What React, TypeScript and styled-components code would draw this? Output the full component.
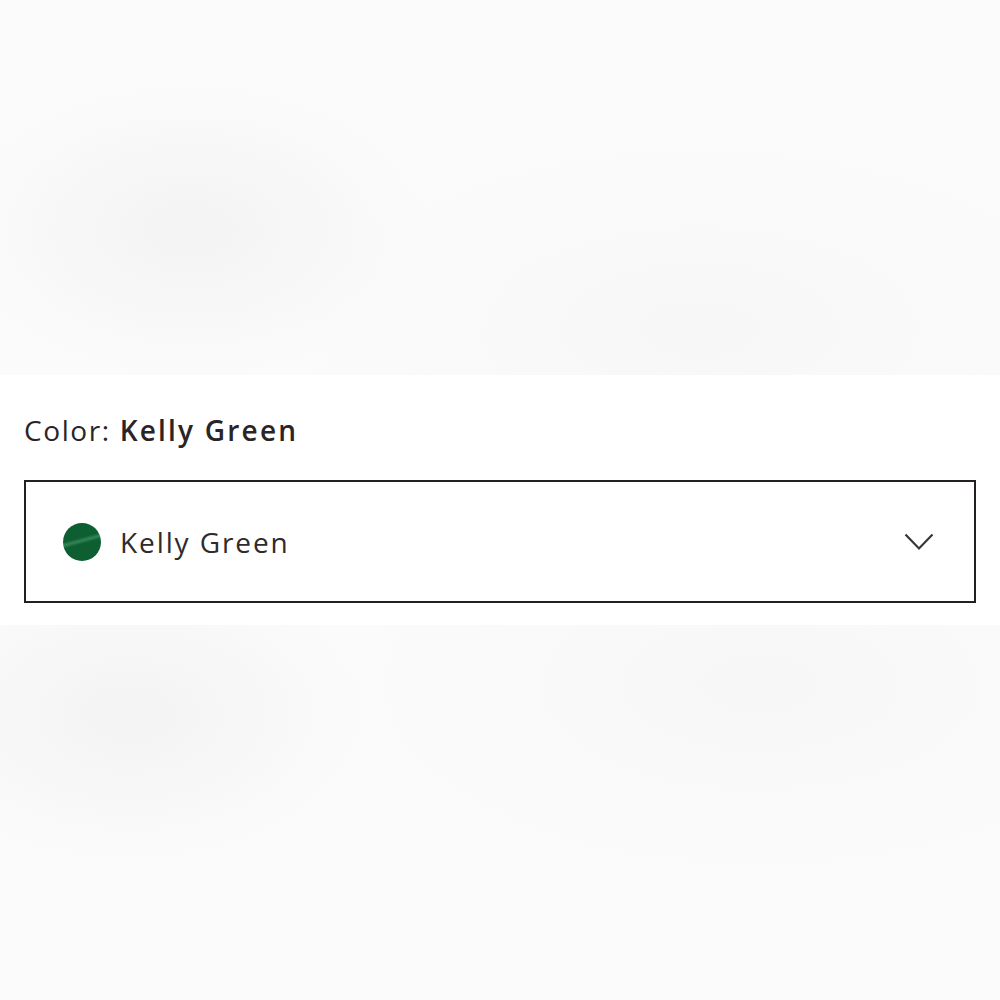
import styled, { createGlobalStyle } from "styled-components";

const GlobalStyle = createGlobalStyle`
  html, body {
    margin: 0;
    padding: 0;
    background: #ffffff;
  }
  * {
    box-sizing: border-box;
  }
`;

const Page = styled.div`
  width: 1000px;
  height: 1000px;
  display: flex;
  flex-direction: column;
  font-family: "Open Sans", "Noto Sans", sans-serif;
  color: #2a2426;
`;

const Backdrop = styled.div<{ $flip?: boolean }>`
  height: 375px;
  background:
    radial-gradient(ellipse 240px 150px at ${(p) => (p.$flip ? "130px 90px" : "190px 230px")}, #f4f3f3 0%, rgba(244, 243, 243, 0) 100%),
    radial-gradient(ellipse 420px 200px at ${(p) => (p.$flip ? "760px 60px" : "700px 330px")}, #f8f7f7 0%, rgba(248, 247, 247, 0) 100%),
    #fbfbfb;
`;

const Panel = styled.section`
  height: 250px;
  background: #ffffff;
  padding: 35px 24px 0 24px;
  display: flex;
  flex-direction: column;
  gap: 30px;
`;

const Label = styled.div`
  font-size: 28px;
  letter-spacing: 1.6px;
  line-height: 40px;
  strong {
    font-weight: 600;
    letter-spacing: 2.2px;
  }
`;

const Select = styled.div`
  height: 123px;
  border: 2px solid #242021;
  display: flex;
  align-items: center;
  padding: 0 40px 0 37px;
  gap: 19px;
`;

const Swatch = styled.span<{ $color: string }>`
  width: 38px;
  height: 38px;
  border-radius: 50%;
  flex: none;
  background:
    linear-gradient(165deg, rgba(255, 255, 255, 0) 40%, rgba(90, 170, 120, 0.5) 47%, rgba(255, 255, 255, 0) 54%),
    ${(p) => p.$color};
`;

const Value = styled.span`
  flex: 1;
  font-size: 28px;
  letter-spacing: 1.9px;
  color: #2f2a2b;
`;

const Chevron = styled.svg`
  width: 30px;
  height: 18px;
  flex: none;
`;

export default function App() {
  return (
    <>
      <GlobalStyle />
      <Page>
        <Backdrop />
        <Panel>
          <Label>
            Color: <strong>Kelly Green</strong>
          </Label>
          <Select>
            <Swatch $color="#0d5f32" />
            <Value>Kelly Green</Value>
            <Chevron viewBox="0 0 30 18" fill="none">
              <path d="M1.5 1.5 L15 15.5 L28.5 1.5" stroke="#3a3536" strokeWidth="2.2" />
            </Chevron>
          </Select>
        </Panel>
        <Backdrop $flip />
      </Page>
    </>
  );
}
